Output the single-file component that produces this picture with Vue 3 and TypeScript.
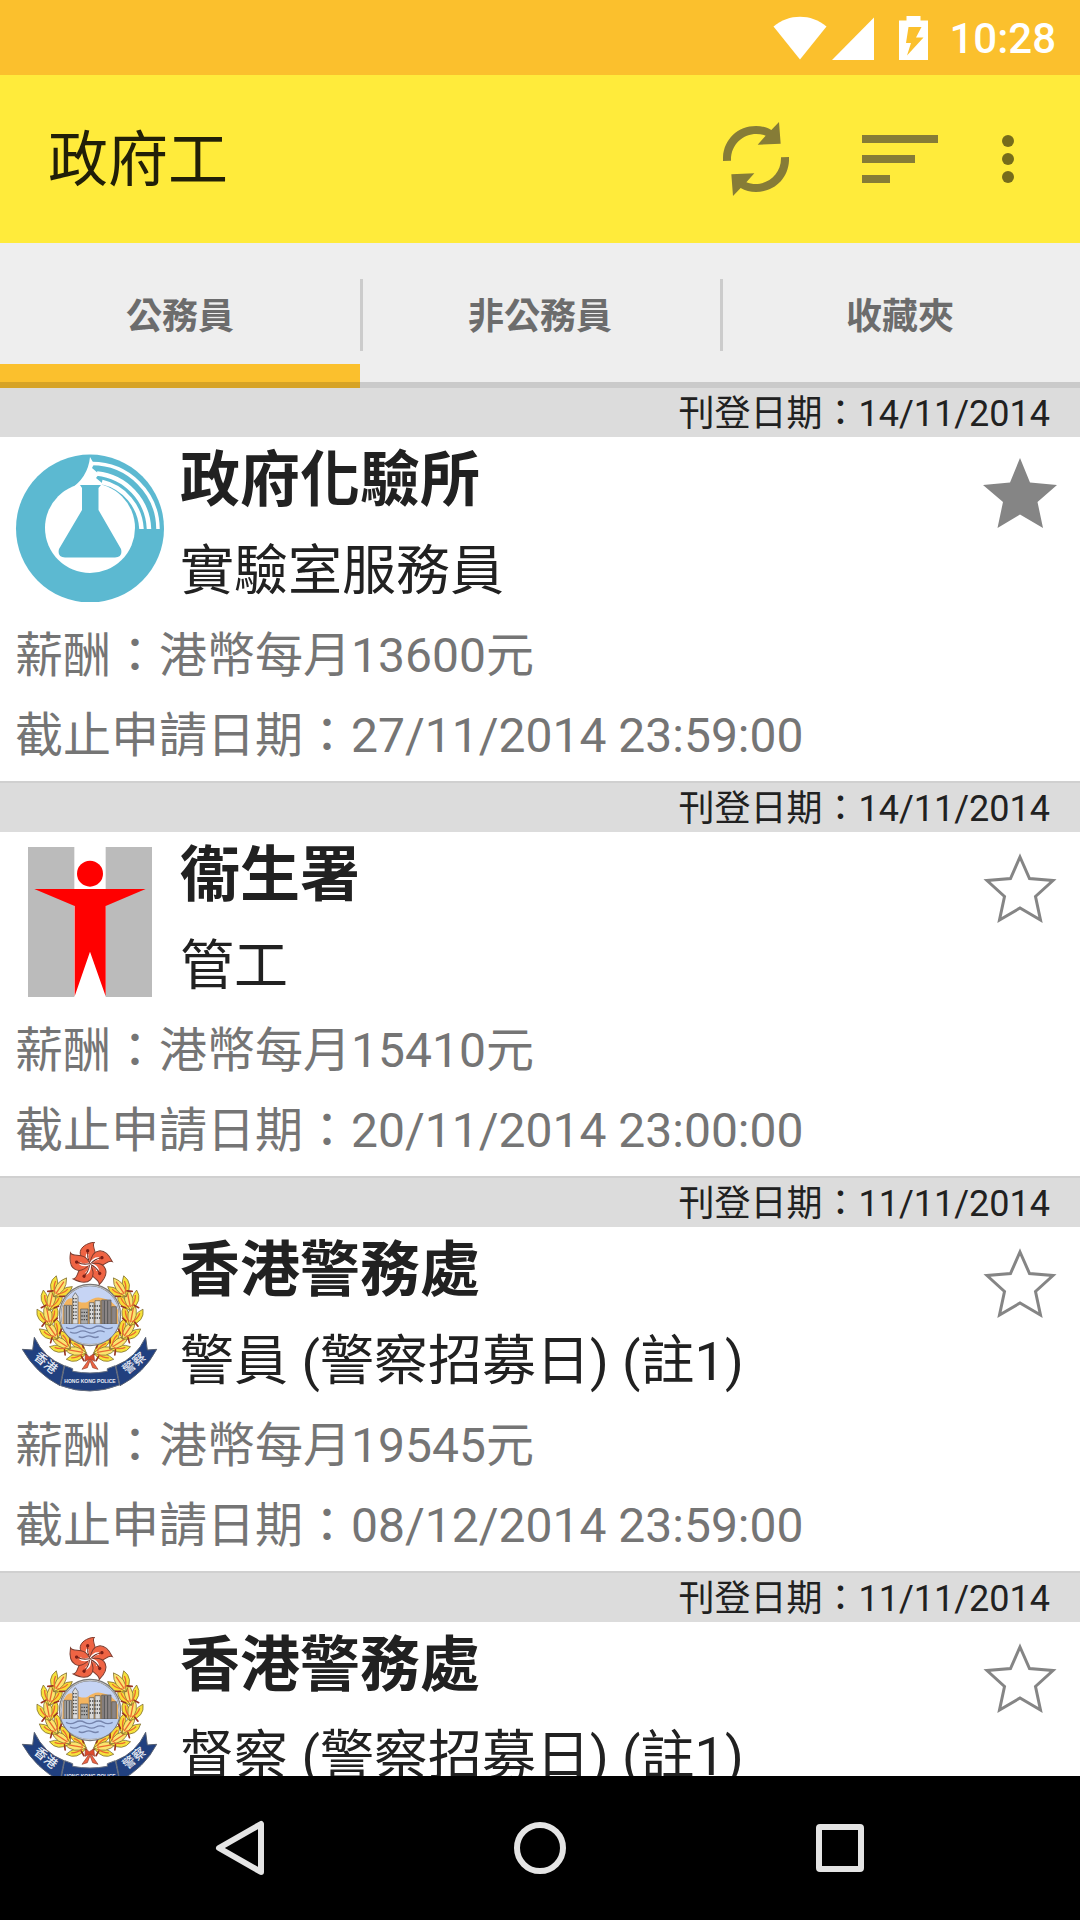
<script setup lang="ts">
import { ref } from 'vue'

type Logo = 'lab' | 'health' | 'police'

interface Job {
  id: number
  posted: string
  department: string
  post: string
  salary?: string
  deadline?: string
  logo: Logo
  starred: boolean
}

interface Leaf {
  x: number
  y: number
  angle: number
}

const tabs = ['公務員', '非公務員', '收藏夾']
const activeTab = ref(0)

const jobs = ref<Job[]>([
  { id: 1, posted: '14/11/2014', department: '政府化驗所', post: '實驗室服務員', salary: '港幣每月13600元', deadline: '27/11/2014 23:59:00', logo: 'lab', starred: true },
  { id: 2, posted: '14/11/2014', department: '衞生署', post: '管工', salary: '港幣每月15410元', deadline: '20/11/2014 23:00:00', logo: 'health', starred: false },
  { id: 3, posted: '11/11/2014', department: '香港警務處', post: '警員 (警察招募日) (註1)', salary: '港幣每月19545元', deadline: '08/12/2014 23:59:00', logo: 'police', starred: false },
  { id: 4, posted: '11/11/2014', department: '香港警務處', post: '督察 (警察招募日) (註1)', logo: 'police', starred: false },
])

// Leaf clusters of the left half of the wreath, from the bow up to the flower.
const leaves: Leaf[] = [8, 31, 54, 77, 100, 122].map((deg) => {
  const t = (deg * Math.PI) / 180
  return {
    x: Math.round(270 - 124 * Math.sin(t)),
    y: Math.round(285 + 114 * Math.cos(t)),
    angle: deg - 88,
  }
})
const petals = [0, 72, 144, 216, 288]
</script>

<template>
  <div class="screen">
    <header class="status">
      <svg class="status-icon" width="54" height="44" viewBox="0 0 54 44" aria-hidden="true">
        <path d="M0.500 10.500C16-2.500 38-2.500 53.500 10.500L27 43.500z" fill="#fff" />
      </svg>
      <svg class="signal" width="42" height="44" viewBox="0 0 42 44" aria-hidden="true">
        <path d="M42 1.500V44H0z" fill="#fff" />
      </svg>
      <svg class="battery" width="29" height="44" viewBox="0 0 29 44" aria-hidden="true">
        <path fill="#fff" fill-rule="evenodd" d="M7.500 0h14v4.500H29V44H0V4.500h7.500zM9.500 11L7 27h5L8 39.500 24.500 21.500H17L22.500 11z" />
      </svg>
      <time class="clock">10:28</time>
    </header>

    <div class="appbar">
      <h1 class="app-title">政府工</h1>
      <button class="action" type="button" aria-label="重新整理">
        <svg width="66" height="74" viewBox="72 66 198 222">
          <g fill="#867c37">
            <path d="M72 183C69 123 113 78 171 78C188 78 204 82 217 90L240 66L245 131L176 134L200 107C151 88 94 123 96 182z" />
            <path transform="rotate(180 171 177)" d="M72 183C69 123 113 78 171 78C188 78 204 82 217 90L240 66L245 131L176 134L200 107C151 88 94 123 96 182z" />
          </g>
        </svg>
      </button>
      <button class="action" type="button" aria-label="排序">
        <svg width="76" height="48" viewBox="0 0 76 48" fill="#867c37">
          <path d="M0 0h76v8H0zM0 20h53v8H0zM0 40h28v8H0z" />
        </svg>
      </button>
      <button class="action narrow" type="button" aria-label="更多選項">
        <svg width="12" height="48" viewBox="0 0 12 48" fill="#766c1b">
          <circle cx="6" cy="6" r="6" />
          <circle cx="6" cy="24" r="6" />
          <circle cx="6" cy="42" r="6" />
        </svg>
      </button>
    </div>

    <nav class="tabs">
      <button
        v-for="(tab, i) in tabs"
        :key="tab"
        class="tab"
        :class="{ active: i === activeTab }"
        type="button"
        @click="activeTab = i"
      >
        {{ tab }}
      </button>
    </nav>

    <main class="list">
      <article v-for="job in jobs" :key="job.id" class="job">
        <p class="posted">刊登日期：{{ job.posted }}</p>
        <div class="summary">
          <svg v-if="job.logo === 'lab'" class="logo" viewBox="0 0 150 150" aria-hidden="true">
            <circle cx="75" cy="76.500" r="74" fill="#5cb9d1" />
            <circle cx="75" cy="76" r="45" fill="#fff" />
            <path d="M75 5Q73 26 54 38L60 52L92 50L87 31L81 26L84 22L77 16L79 12z" fill="#fff" />
            <g fill="none" stroke="#fff">
              <path d="M77 11.500A66 66 0 0 1 143 77" stroke-width="3.500" />
              <path d="M82 21.500A58 58 0 0 1 134 77" stroke-width="4.500" />
              <path d="M87 30A51 51 0 0 1 126.500 77" stroke-width="4.500" />
            </g>
            <path d="M65 33H86L83.500 36V58L106 97Q108 105.500 100 105.500H50Q42 105.500 44 97L67 58V36z" fill="#5cb9d1" />
          </svg>

          <svg v-else-if="job.logo === 'health'" class="logo" viewBox="45 231 450 450" aria-hidden="true">
            <path d="M84 231H223V681H84zM317 231H456V681H317z" fill="#bbb" />
            <circle cx="270" cy="311" r="39" fill="#f00" />
            <path d="M103 357H437L317 408V679L270 545L224 679V408z" fill="#f00" />
          </svg>

          <svg v-else class="logo" viewBox="45 66 450 450" aria-hidden="true">
            <g v-for="side in [1, -1]" :key="side" :transform="side === 1 ? undefined : 'translate(540 0) scale(-1 1)'">
              <path d="M262 404C190 400 140 345 148 280Q150 235 185 195" fill="none" stroke="#8a3b22" stroke-width="5" />
              <g v-for="leaf in leaves" :key="leaf.angle" :transform="`translate(${leaf.x} ${leaf.y}) rotate(${leaf.angle})`">
                <g stroke="#75632a" stroke-width="2">
                  <path d="M0 6Q-42 -14 -29 -50Q-2 -30 0 6z" fill="#f6e23c" />
                  <path d="M0 6Q42 -14 29 -50Q2 -30 0 6z" fill="#f9d936" />
                  <path d="M0 6Q-25 -28 0 -62Q25 -28 0 6z" fill="#fbe56e" />
                </g>
                <path d="M-4 -6Q-19 -18 -22 -36M0 -4V-48M4 -6Q19 -18 22 -36" fill="none" stroke="#ea6a30" stroke-width="4" />
                <path d="M-24 3L-12 -7M14 -5L26 -12" stroke="#9a3520" stroke-width="5" stroke-linecap="round" />
              </g>
            </g>

            <circle cx="270" cy="285" r="90" fill="#c6d4f4" stroke="#777" stroke-width="7" />
            <circle cx="270" cy="285" r="89" fill="none" stroke="#c8c8c8" stroke-width="3" />
            <path d="M188 262Q200 228 220 236Q245 252 262 246Q285 228 305 234Q340 240 354 270V312H187z" fill="#f3b45f" />
            <g stroke="#555" stroke-width="2">
              <path d="M192 256h23v56h-23zM242 267h22v45h-22z" fill="#aaa" />
              <path d="M218 230l8-12 8 12v82h-16z" fill="#ddd" />
              <path d="M268 248h14v64h-14zM285 242h16v70h-16z" fill="#d9d9d9" />
              <path d="M305 240h28v72h-28zM335 260h14v52h-14z" fill="#8b8585" />
            </g>
            <path d="M219 236h14M219 246h14M219 256h14M219 266h14M219 276h14M219 286h14M219 296h14M244 277h18M244 288h18M244 299h18M269 258h32M269 270h32M269 282h32M269 294h32" stroke="#444" stroke-width="4" stroke-dasharray="4 3" />
            <path d="M313 242v70M323 242v70M199 258v54M208 258v54" stroke="#555" stroke-width="3" />
            <path d="M185 312H355Q340 371 270 371Q202 368 185 312z" fill="#b9cdf1" />
            <path d="M198 322q14 8 28 0t28 0 28 0 28 0 28 0M210 336q14 7 26 0t26 0 26 0 26 0M236 350q10 5 20 0t20 0 20 0" fill="none" stroke="#7584ac" stroke-width="4" />

            <g v-for="p in petals" :key="p" :transform="`rotate(${p} 270 132)`">
              <path d="M270 132C226 112 232 74 284 66C270 80 304 104 270 132z" fill="#ef6444" stroke="#7b3b2e" stroke-width="3" />
              <path d="M270 130C261 120 259 110 263 102" fill="none" stroke="#fff" stroke-width="8" />
              <path d="M270 130Q260 112 263 96" fill="none" stroke="#6b2a20" stroke-width="3" />
              <circle cx="263" cy="92" r="5" fill="#7b1f17" />
            </g>

            <path d="M103 352Q132 414 192 437L180 497Q108 460 67 388L98 390z" fill="#21407f" stroke="#555e70" stroke-width="3" />
            <path d="M437 352Q408 414 348 437L360 497Q432 460 470 388L442 390z" fill="#21407f" stroke="#555e70" stroke-width="3" />
            <path d="M194 437L218 446V454Q270 464 322 454V446L346 437L358 495Q270 530 182 497z" fill="#21407f" stroke="#666e7e" stroke-width="3" />
            <path d="M270 414L246 448L262 443L270 422L278 443L294 448z" fill="#ef6444" stroke="#93402a" stroke-width="2" />
            <path d="M256 402L268 410L281 402L284 424L270 417L255 424z" fill="#dd4a2c" stroke="#93402a" stroke-width="2" />
            <text class="ribbon-cjk" transform="translate(100 414) rotate(40)">香港</text>
            <text class="ribbon-cjk" transform="translate(382 464) rotate(-40)">警察</text>
            <text class="ribbon-latin" x="270" y="489" text-anchor="middle">HONG KONG POLICE</text>
          </svg>

          <div class="names">
            <h2 class="department">{{ job.department }}</h2>
            <p class="post">{{ job.post }}</p>
          </div>

          <button
            class="star"
            type="button"
            aria-label="收藏"
            :aria-pressed="job.starred"
            @click="job.starred = !job.starred"
          >
            <svg width="74" height="72" viewBox="0 0 74 72">
              <path v-if="job.starred" d="M37 1L47 25.500L74 28L54.500 45L60 71L37 57.500L14.500 71L20 45L0 28L27 25.500z" fill="#858585" />
              <path v-else d="M37 5L46.500 26.500L70 28.500L52.500 44.500L57.500 68L37 56L16.500 68L21.500 44.500L4 28.500L27.500 26.500z" fill="none" stroke="#858585" stroke-width="3" />
            </svg>
          </button>
        </div>
        <div v-if="job.salary" class="details">
          <p>薪酬：{{ job.salary }}</p>
          <p>截止申請日期：{{ job.deadline }}</p>
        </div>
      </article>
    </main>

    <footer class="navbar">
      <button class="nav-button" type="button" aria-label="返回">
        <svg width="56" height="56" viewBox="0 0 56 56"><path d="M49 4V52L7 28z" /></svg>
      </button>
      <button class="nav-button" type="button" aria-label="主畫面">
        <svg width="56" height="56" viewBox="0 0 56 56"><circle cx="28" cy="28" r="23" /></svg>
      </button>
      <button class="nav-button" type="button" aria-label="最近使用">
        <svg width="56" height="56" viewBox="0 0 56 56"><rect x="7" y="7" width="42" height="42" rx="1" /></svg>
      </button>
    </footer>
  </div>
</template>

<style>
body {
  margin: 0;
}
</style>

<style scoped>
.screen {
  display: flex;
  flex-direction: column;
  height: 100vh;
  overflow: hidden;
  background: #fff;
  color: #212121;
  font-family: Roboto, "Noto Sans CJK TC", sans-serif;
}

h1,
h2,
p {
  margin: 0;
}

button {
  padding: 0;
  border: 0;
  background: none;
  font-family: inherit;
  cursor: pointer;
}

svg {
  display: block;
}

.status {
  display: flex;
  flex: none;
  align-items: center;
  justify-content: flex-end;
  height: 75px;
  padding-right: 24px;
  background: #fbc02d;
}

.signal {
  margin-left: 5px;
}

.battery {
  margin: 0 21px 0 25px;
}

.clock {
  padding-top: 3px;
  color: #fff;
  font-size: 42px;
  font-weight: 500;
  line-height: 48px;
}

.appbar {
  display: flex;
  flex: none;
  align-items: center;
  height: 168px;
  padding: 0 36px 0 48px;
  background: #ffeb3b;
}

.app-title {
  flex: 1;
  padding-top: 3px;
  color: #211f08;
  font-size: 60px;
  font-weight: 400;
  line-height: 80px;
}

.action {
  display: flex;
  align-items: center;
  justify-content: center;
  width: 144px;
  height: 144px;
}

.action.narrow {
  width: 72px;
}

.tabs {
  display: flex;
  flex: none;
  background: #eee;
}

.tab {
  flex: 1;
  height: 145px;
  border-bottom: 6px solid #cacaca;
  color: #6c6c6c;
  font-size: 36px;
  font-weight: 700;
}

.tab + .tab {
  background: linear-gradient(#ccc, #ccc) no-repeat left 36px / 3px 72px;
}

.tab.active {
  border-bottom-color: #d6a326;
  box-shadow: inset 0 -18px #fbc02d;
}

.list {
  flex: 1;
  min-height: 0;
  overflow: hidden;
}

.job {
  border-bottom: 2px solid #d0d0d0;
}

.posted {
  padding: 3px 30px 0 0;
  background: #dcdcdc;
  font-size: 36px;
  line-height: 46px;
  text-align: right;
}

.summary {
  display: flex;
  align-items: flex-start;
  padding: 0 23px 0 15px;
}

.logo {
  flex: none;
  width: 150px;
  height: 150px;
  margin: 15px 15px 0 0;
}

.names {
  flex: 1;
}

.department {
  font-size: 60px;
  font-weight: 700;
  line-height: 88px;
}

.post {
  padding-top: 3px;
  font-size: 54px;
  line-height: 88px;
}

.star {
  margin-top: 20px;
}

.details {
  padding: 0 15px 5px;
  color: #757575;
  font-size: 48px;
  line-height: 80px;
}

.ribbon-cjk {
  fill: #e8ecf5;
  font-family: "Noto Sans CJK TC", sans-serif;
  font-size: 38px;
  font-weight: 500;
}

.ribbon-latin {
  fill: #e8ecf5;
  font-family: "Liberation Sans", sans-serif;
  font-size: 15px;
  font-weight: 700;
}

.navbar {
  display: flex;
  flex: none;
  align-items: center;
  justify-content: space-around;
  height: 144px;
  padding: 0 90px;
  background: #000;
}

.nav-button {
  display: flex;
  align-items: center;
  justify-content: center;
  flex: 1;
  height: 144px;
}

.nav-button svg {
  fill: none;
  stroke: #e4e4e4;
  stroke-width: 6px;
  stroke-linejoin: round;
}
</style>
